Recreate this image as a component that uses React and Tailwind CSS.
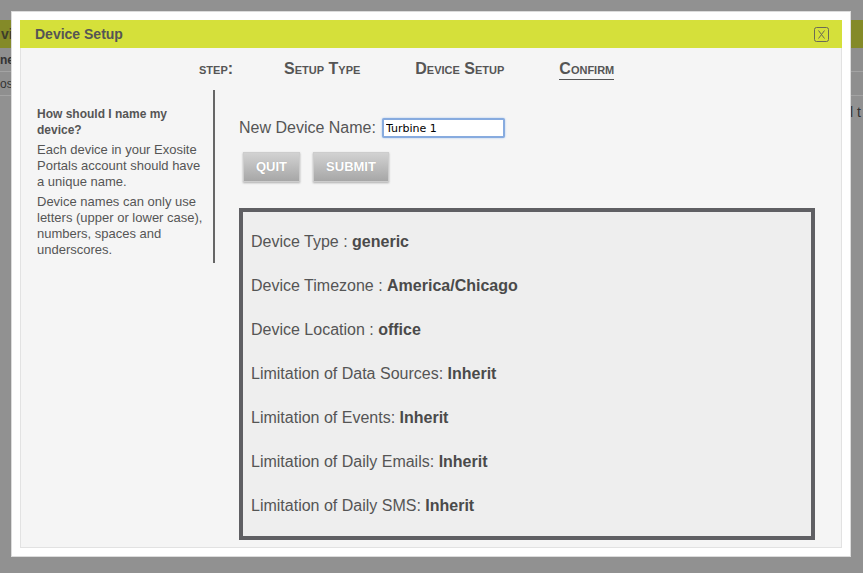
import React from 'react';

const steps = [
  { label: 'Setup Type', active: false },
  { label: 'Device Setup', active: false },
  { label: 'Confirm', active: true },
];

const summary = [
  { label: 'Device Type : ', value: 'generic' },
  { label: 'Device Timezone : ', value: 'America/Chicago' },
  { label: 'Device Location : ', value: 'office' },
  { label: 'Limitation of Data Sources: ', value: 'Inherit' },
  { label: 'Limitation of Events: ', value: 'Inherit' },
  { label: 'Limitation of Daily Emails: ', value: 'Inherit' },
  { label: 'Limitation of Daily SMS: ', value: 'Inherit' },
];

const CloseIcon = () => (
  <svg width="15" height="15" viewBox="0 0 15 15" fill="none">
    <rect x="0.5" y="0.5" width="14" height="14" rx="2" stroke="#6b6b55" strokeWidth="1" />
    <path d="M4.5 3.5 L10.5 11.5 M10.5 3.5 L4.5 11.5" stroke="#6b6b55" strokeWidth="1" />
  </svg>
);

const App = () => {
  return (
    <div
      className="relative w-[863px] h-[573px] overflow-hidden bg-[#919191]"
      style={{ fontFamily: '"Liberation Sans", Arial, sans-serif' }}
    >
      {/* page behind the overlay */}
      <div className="flex flex-col pt-[20px]">
        <div className="h-[28px] bg-[#848a28] flex items-center">
          <span className="pl-[1px] text-[14px] font-bold text-[#3d3d2a]">vi</span>
        </div>
        <div className="h-[24px] flex items-center border-b border-[#a3a3a3] bg-[#8f8f8f]">
          <span className="text-[12px] font-bold text-[#333]">ne</span>
        </div>
        <div className="h-[24px] flex items-center border-b border-[#a3a3a3] bg-[#8f8f8f]">
          <span className="text-[12px] text-[#333]">osi</span>
        </div>
        <div className="flex justify-end pr-[2px] pt-[6px]">
          <span className="text-[14px] text-[#333]">ll t</span>
        </div>
      </div>

      {/* modal */}
      <div className="absolute left-[11px] top-[11px] w-[840px] h-[546px] bg-white border border-[#dcdcdc] p-[8px]">
        <div className="flex flex-col h-full bg-[#f5f5f5] border border-[#e2e2e2]">
          <div className="h-[28px] shrink-0 bg-[#d5e03a] flex items-center justify-between pl-[15px] pr-[13px] -mx-px -mt-px">
            <span className="text-[14px] font-bold text-[#555]">Device Setup</span>
            <CloseIcon />
          </div>

          {/* steps */}
          <div className="h-[42px] shrink-0 flex items-start pt-[13px] pl-[178px] text-[16px] font-bold text-[#555] [font-variant:small-caps]">
            <span className="leading-4">step:</span>
            {steps.map((s, i) => (
              <span
                key={s.label}
                className={`leading-4 ${i === 0 ? 'ml-[51px]' : 'ml-[55px]'} ${s.active ? 'border-b border-[#555] pb-[2px]' : ''}`}
              >
                {s.label}
              </span>
            ))}
          </div>

          <div className="flex">
            {/* help sidebar */}
            <div className="w-[194px] self-start border-r-2 border-[#666] pl-[16px] pr-[10px] pt-[16px] pb-[5px] text-[13px] leading-4 text-[#555]">
              <p className="font-bold text-[12px]">How should I name my device?</p>
              <p className="mt-[4px]">Each device in your Exosite Portals account should have a unique name.</p>
              <p className="mt-[4px]">Device names can only use letters (upper or lower case), numbers, spaces and underscores.</p>
            </div>

            {/* form */}
            <div className="flex flex-col pl-[24px] pt-[28px]">
              <div className="flex items-center h-[20px]">
                <span className="text-[16px] text-[#555]">New Device Name:</span>
                <input
                  defaultValue="Turbine 1"
                  className="ml-[6px] w-[123px] h-[20px] px-[2px] bg-white border-2 border-[#87abdf] rounded-[2px] text-[11px] text-black outline-none shadow-[0_0_2px_#9fc0ef]"
                  style={{ fontFamily: '"DejaVu Sans", sans-serif' }}
                />
              </div>
              <div className="flex gap-[13px] ml-[4px] mt-[14px]">
                <button className="w-[57px] h-[30px] border border-[#cdcdcd] bg-gradient-to-b from-[#d2d2d2] to-[#a7a7a7] text-white text-[13px] font-bold shadow-[0_1px_2px_rgba(0,0,0,0.3)] [text-shadow:0_0_1px_rgba(0,0,0,0.15)]">
                  QUIT
                </button>
                <button className="w-[76px] h-[30px] border border-[#cdcdcd] bg-gradient-to-b from-[#d2d2d2] to-[#a7a7a7] text-white text-[13px] font-bold shadow-[0_1px_2px_rgba(0,0,0,0.3)] [text-shadow:0_0_1px_rgba(0,0,0,0.15)]">
                  SUBMIT
                </button>
              </div>
              <div className="mt-[26px] w-[576px] border-4 border-[#5f5f63] bg-[#eeeeee] pl-[8px] pt-[20px] pb-[20px] flex flex-col gap-[24px]">
                {summary.map((row) => (
                  <div key={row.label} className="text-[16px] leading-5 text-[#555]">
                    {row.label}
                    <span className="font-bold text-[#4a4a4a]">{row.value}</span>
                  </div>
                ))}
              </div>
            </div>
          </div>
        </div>
      </div>
    </div>
  );
};

export default App;
